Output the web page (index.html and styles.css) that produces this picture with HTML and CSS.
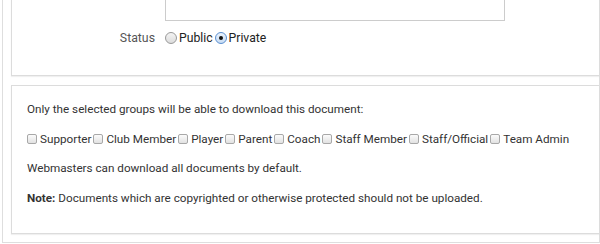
FILE: index.html
```html
<!DOCTYPE html>
<html>
<head>
<meta charset="utf-8">
<link rel="stylesheet" href="styles.css">
</head>
<body>
<div class="frame">
  <div class="panel panel-top">
    <div class="field-row">
      <div class="label"></div>
      <div class="textbox"></div>
    </div>
    <div class="field-row status-row">
      <div class="label">Status</div>
      <div class="radios">
        <label class="opt"><span class="radio"></span>Public</label>
        <label class="opt"><span class="radio checked"></span>Private</label>
      </div>
    </div>
  </div>
  <div class="panel panel-bottom">
    <p class="line">Only the selected groups will be able to download this document:</p>
    <div class="line checks">
      <label class="opt"><span class="check"></span>Supporter</label>
      <label class="opt"><span class="check"></span>Club Member</label>
      <label class="opt"><span class="check"></span>Player</label>
      <label class="opt"><span class="check"></span>Parent</label>
      <label class="opt"><span class="check"></span>Coach</label>
      <label class="opt"><span class="check"></span>Staff Member</label>
      <label class="opt"><span class="check"></span>Staff/Official</label>
      <label class="opt"><span class="check"></span>Team Admin</label>
    </div>
    <p class="line">Webmasters can download all documents by default.</p>
    <p class="line"><b>Note:</b> Documents which are copyrighted or otherwise protected should not be uploaded.</p>
  </div>
</div>
</body>
</html>
```

FILE: styles.css
```css
html, body {
  margin: 0;
  padding: 0;
  background: #fff;
  overflow: hidden;
}
body {
  font-family: Roboto, "Liberation Sans", sans-serif;
  font-size: 11.7px;
  color: #333;
}
.frame {
  margin: -18px 0 0 2px;
  width: 598px;
  height: 261px;
  box-sizing: border-box;
  border: 1px solid #dedede;
  border-top: none;
  padding: 0 0 0 8px;
  display: flex;
  flex-direction: column;
  gap: 9px;
}
.panel {
  border: 1px solid #dcdcdc;
  border-right: none;
  box-shadow: 0 1px 1px rgba(0,0,0,0.06);
  background: #fff;
}
.panel-top {
  height: 94px;
  box-sizing: border-box;
}
.field-row {
  display: flex;
  align-items: center;
}
.label {
  width: 143px;
  text-align: right;
  padding-right: 10px;
  color: #555;
  font-size: 12.3px;
}
.textbox {
  width: 340px;
  height: 38px;
  border: 1px solid #ccc;
  border-top: none;
  box-sizing: border-box;
}
.status-row {
  margin-top: 10px;
}
.radios {
  display: flex;
  gap: 2px;
}
.opt {
  display: inline-flex;
  align-items: center;
  gap: 2px;
}
.radios .opt {
  font-size: 12.2px;
  color: #222;
}
.radio {
  width: 10px;
  height: 10px;
  border-radius: 50%;
  border: 1px solid #999;
  background: linear-gradient(#f4f4f4, #dcdcdc);
  box-sizing: content-box;
  display: inline-flex;
  align-items: center;
  justify-content: center;
}
.radio.checked {
  border-color: #5b8fd0;
  background: linear-gradient(#eaf3fd, #c8dcf3);
}
.radio.checked::after {
  content: "";
  width: 4px;
  height: 4px;
  border-radius: 50%;
  background: #111;
}
.panel-bottom {
  height: 149px;
  box-sizing: border-box;
  padding: 16px 0 0 15px;
  display: flex;
  flex-direction: column;
  gap: 14.5px;
}
.line {
  margin: 0;
  height: 15px;
  line-height: 15px;
}
.checks {
  display: flex;
  gap: 2px;
}
.checks .opt {
  gap: 3px;
}
.check {
  width: 8px;
  height: 8px;
  border: 1px solid #a8a8a8;
  border-radius: 2px;
  background: linear-gradient(#fbfbfb, #e2e2e2);
}
b {
  font-weight: bold;
}
```
